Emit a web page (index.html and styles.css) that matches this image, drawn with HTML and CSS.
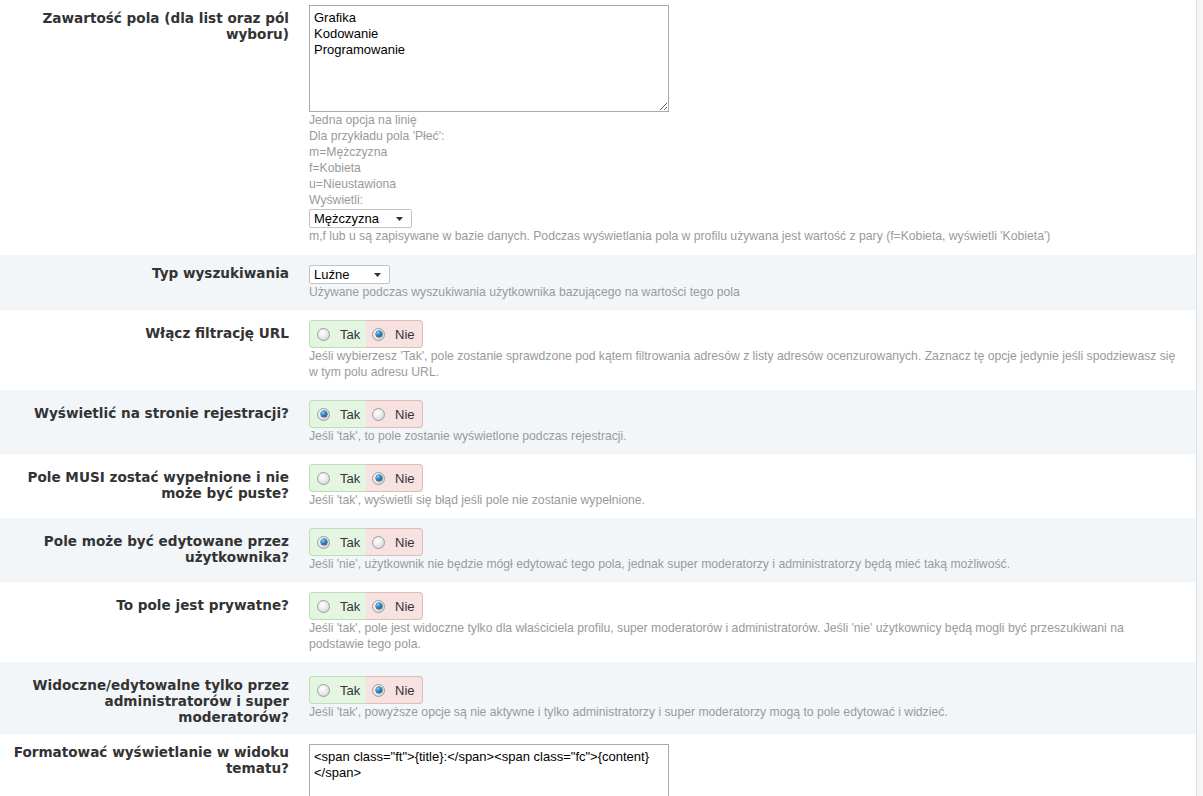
FILE: index.html
```html
<!DOCTYPE html>
<html lang="pl">
<head>
<meta charset="utf-8">
<title>Pole profilu</title>
<link rel="stylesheet" href="styles.css">
</head>
<body>
<div class="panel">

  <div class="row row-first">
    <div class="lbl lbl-top">Zawartość pola (dla list oraz pól wyboru)</div>
    <div class="field">
      <textarea class="ta">Grafika
Kodowanie
Programowanie</textarea>
      <div class="desc">Jedna opcja na linię<br>Dla przykładu pola 'Płeć':<br>m=Mężczyzna<br>f=Kobieta<br>u=Nieustawiona<br>Wyświetli:</div>
      <div class="sel sel-m"><span>Mężczyzna</span><svg class="arr" width="7" height="4" viewBox="0 0 7 4"><path d="M0 0H7L3.5 4Z" fill="#333"/></svg></div>
      <div class="desc">m,f lub u są zapisywane w bazie danych. Podczas wyświetlania pola w profilu używana jest wartość z pary (f=Kobieta, wyświetli 'Kobieta')</div>
    </div>
  </div>

  <div class="row alt">
    <div class="lbl lbl-top">Typ wyszukiwania</div>
    <div class="field">
      <div class="sel sel-l"><span>Luźne</span><svg class="arr" width="7" height="4" viewBox="0 0 7 4"><path d="M0 0H7L3.5 4Z" fill="#333"/></svg></div>
      <div class="desc">Używane podczas wyszukiwania użytkownika bazującego na wartości tego pola</div>
    </div>
  </div>

  <div class="row">
    <div class="lbl">Włącz filtrację URL</div>
    <div class="field">
      <div class="yn"><span class="opt yes"><span class="rd"></span>Tak</span><span class="opt no"><span class="rd on"></span>Nie</span></div>
      <div class="desc">Jeśli wybierzesz 'Tak', pole zostanie sprawdzone pod kątem filtrowania adresów z listy adresów ocenzurowanych. Zaznacz tę opcje jedynie jeśli spodziewasz się w tym polu adresu URL.</div>
    </div>
  </div>

  <div class="row alt">
    <div class="lbl">Wyświetlić na stronie rejestracji?</div>
    <div class="field">
      <div class="yn"><span class="opt yes"><span class="rd on"></span>Tak</span><span class="opt no"><span class="rd"></span>Nie</span></div>
      <div class="desc">Jeśli 'tak', to pole zostanie wyświetlone podczas rejestracji.</div>
    </div>
  </div>

  <div class="row">
    <div class="lbl">Pole MUSI zostać wypełnione i nie może być puste?</div>
    <div class="field">
      <div class="yn"><span class="opt yes"><span class="rd"></span>Tak</span><span class="opt no"><span class="rd on"></span>Nie</span></div>
      <div class="desc">Jeśli 'tak', wyświetli się błąd jeśli pole nie zostanie wypełnione.</div>
    </div>
  </div>

  <div class="row alt">
    <div class="lbl">Pole może być edytowane przez użytkownika?</div>
    <div class="field">
      <div class="yn"><span class="opt yes"><span class="rd on"></span>Tak</span><span class="opt no"><span class="rd"></span>Nie</span></div>
      <div class="desc">Jeśli 'nie', użytkownik nie będzie mógł edytować tego pola, jednak super moderatorzy i administratorzy będą mieć taką możliwość.</div>
    </div>
  </div>

  <div class="row">
    <div class="lbl">To pole jest prywatne?</div>
    <div class="field">
      <div class="yn"><span class="opt yes"><span class="rd"></span>Tak</span><span class="opt no"><span class="rd on"></span>Nie</span></div>
      <div class="desc">Jeśli 'tak', pole jest widoczne tylko dla właściciela profilu, super moderatorów i administratorów. Jeśli 'nie' użytkownicy będą mogli być przeszukiwani na podstawie tego pola.</div>
    </div>
  </div>

  <div class="row alt">
    <div class="lbl">Widoczne/edytowalne tylko przez administratorów i super moderatorów?</div>
    <div class="field">
      <div class="yn"><span class="opt yes"><span class="rd"></span>Tak</span><span class="opt no"><span class="rd on"></span>Nie</span></div>
      <div class="desc">Jeśli 'tak', powyższe opcje są nie aktywne i tylko administratorzy i super moderatorzy mogą to pole edytować i widzieć.</div>
    </div>
  </div>

  <div class="row row-last">
    <div class="lbl lbl-top">Formatować wyświetlanie w widoku tematu?</div>
    <div class="field">
      <textarea class="ta ta-fmt">&lt;span class="ft"&gt;{title}:&lt;/span&gt;&lt;span class="fc"&gt;{content}&lt;/span&gt;</textarea>
    </div>
  </div>

</div>
</body>
</html>
```

FILE: styles.css
```css
html, body {
  margin: 0;
  padding: 0;
  height: 100%;
  overflow: hidden;
}

body {
  background: #f6f6f6;
  font-family: "Liberation Sans", Arial, sans-serif;
}

.panel {
  width: 1196px;
  min-height: 100%;
  background: #ffffff;
  border-right: 1px solid #d5e1ee;
}

.row {
  display: flex;
  align-items: center;
}

.row.alt {
  background: #f3f6f9;
}

.lbl {
  align-self: flex-start;
  flex: 0 0 289px;
  box-sizing: border-box;
  padding: 15px 0 9px 8px;
  text-align: right;
  font-family: "DejaVu Sans", Verdana, sans-serif;
  font-weight: bold;
  font-size: 13.6px;
  line-height: 16px;
  color: #333333;
}

.lbl.lbl-top {
  padding-top: 10px;
}

.field {
  flex: 1 1 auto;
  min-width: 0;
  padding: 10px 15px 10px 20px;
}

.row-first .field {
  padding-top: 5px;
  padding-bottom: 11px;
}

.desc {
  font-size: 12.2px;
  line-height: 16px;
  color: #9a9a9a;
}

.ta {
  display: block;
  box-sizing: border-box;
  width: 360px;
  height: 107px;
  margin: 0;
  padding: 4px;
  border: 1px solid #a9a9a9;
  border-radius: 0;
  font-family: "Liberation Sans", Arial, sans-serif;
  font-size: 13px;
  line-height: 16px;
  color: #000;
  background: #fff;
}

.ta.ta-fmt {
  height: 110px;
}

.sel {
  display: flex;
  align-items: center;
  justify-content: space-between;
  box-sizing: border-box;
  height: 19px;
  padding: 0 8px 0 4px;
  border: 1px solid #c4c4c4;
  border-radius: 2px;
  background: #fff;
  font-size: 13px;
  color: #000;
}

.row-first .sel {
  margin-top: 1px;
}

.sel-m {
  width: 103px;
}

.sel-l {
  width: 81px;
}

.arr {
  display: block;
}

.yn {
  display: flex;
  height: 28px;
}

.opt {
  display: flex;
  align-items: center;
  box-sizing: border-box;
  width: 57px;
  height: 28px;
  padding-left: 7px;
  font-size: 13px;
  color: #333;
}

.opt.yes {
  background: #e4f5e1;
  border: 1px solid #b9dfb3;
  border-right: none;
  border-radius: 4px 0 0 4px;
}

.opt.no {
  background: #f7e2e2;
  border: 1px solid #e6b9b9;
  border-left: none;
  border-radius: 0 4px 4px 0;
  padding-left: 6px;
}

.rd {
  position: relative;
  box-sizing: border-box;
  width: 13px;
  height: 13px;
  margin-right: 10px;
  border: 1px solid #9d9d9d;
  border-radius: 50%;
  background: radial-gradient(circle at 40% 35%, #ffffff 0%, #ececec 45%, #c9c9c9 100%);
  flex: 0 0 13px;
}

.rd.on::after {
  content: "";
  position: absolute;
  left: 2.5px;
  top: 2.5px;
  width: 6px;
  height: 6px;
  border-radius: 50%;
  background: radial-gradient(circle at 35% 30%, #8fd0ff 0%, #2a86cf 40%, #0b3f75 100%);
  box-shadow: 0 0 0 0.5px #1d3550;
}
```
